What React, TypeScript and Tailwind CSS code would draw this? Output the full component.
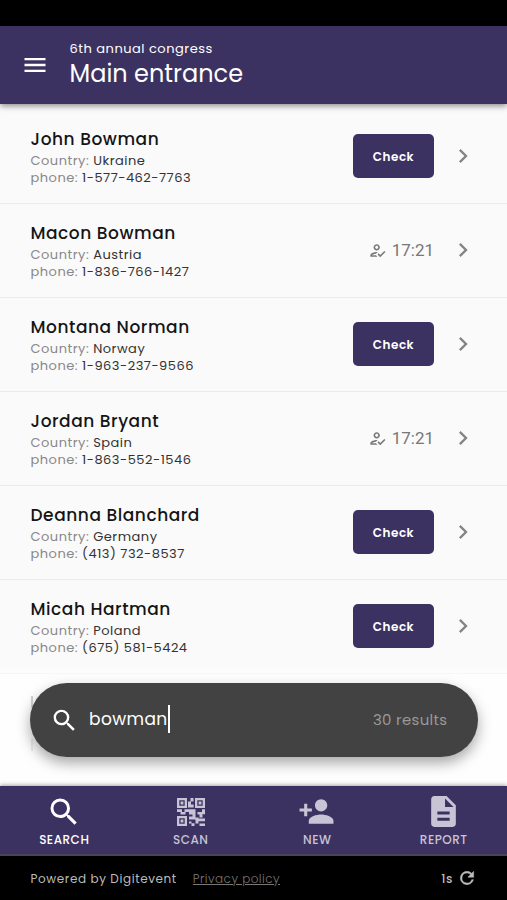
import {
  MdMenu,
  MdSearch,
  MdPersonAdd,
  MdDescription,
  MdChevronRight,
  MdOutlineHowToReg,
} from 'react-icons/md';
import clsx from 'clsx';

type Guest = {
  name: string;
  country: string;
  phone: string;
  checkedAt?: string;
};

const guests: Guest[] = [
  { name: 'John Bowman', country: 'Ukraine', phone: '1-577-462-7763' },
  { name: 'Macon Bowman', country: 'Austria', phone: '1-836-766-1427', checkedAt: '17:21' },
  { name: 'Montana Norman', country: 'Norway', phone: '1-963-237-9566' },
  { name: 'Jordan Bryant', country: 'Spain', phone: '1-863-552-1546', checkedAt: '17:21' },
  { name: 'Deanna Blanchard', country: 'Germany', phone: '(413) 732-8537' },
  { name: 'Micah Hartman', country: 'Poland', phone: '(675) 581-5424' },
];

const QrIcon = () => (
  <svg viewBox="0 0 28 28" className="h-7 w-7" fill="currentColor">
    <path fillRule="evenodd" d="M0 0h10v10H0zM2.3 2.3v5.4h5.4V2.3zM18 0h10v10H18zM20.3 2.3v5.4h5.4V2.3zM0 18h10v10H0zM2.3 20.3v5.4h5.4v-5.4z" />
    <path d="M3.6 3.6h2.8v2.8H3.6zM21.6 3.6h2.8v2.8h-2.8zM3.6 21.6h2.8v2.8H3.6z" />
    <path d="M13.5 0h3v3.5h-3zM11 3.5h3v3h2.7V9.5H11zM0 11.3h5v2.6H0zM3.5 13.9h5v2.5h-5zM7.5 11.3h11v2.6h-11zM12 13.9h6.5v2.5H12zM25 11.3h3v5h-3zM20.5 13.9h4.5v2.5h-4.5zM22.5 16.4h3v3h-3zM12 18.5h4v3h-4zM15.5 16.4h3v5h-3zM18.5 19.4h3v6h-3zM21.5 20.5h6.5v2.7h-6.5zM12 23.5h2.5v2H12zM14.5 25.2h3v2.8h-3zM22.5 25.4H28V28h-5.5z" />
  </svg>
);

const RefreshIcon = () => (
  <svg viewBox="0 0 24 24" className="mb-0.5 ml-1 h-5 w-5" fill="currentColor" stroke="currentColor" strokeWidth="0.6">
    <path d="M17.65 6.35A7.96 7.96 0 0 0 12 4a8 8 0 1 0 7.73 10h-2.08A6 6 0 1 1 12 6c1.66 0 3.14.69 4.22 1.78L13 11h7V4z" />
  </svg>
);

const Header = () => (
  <header className="relative z-10 flex h-[78px] shrink-0 items-center bg-[#3c3261] pl-[21px] text-white shadow-[0_2px_6px_rgba(0,0,0,0.45)]">
    <MdMenu className="h-7 w-7" />
    <div className="ml-[20.5px]">
      <p className="text-[13px] leading-4 tracking-[0.5px]">6th annual congress</p>
      <h1 className="pt-px text-[24px] leading-8">Main entrance</h1>
    </div>
  </header>
);

const GuestRow = ({ guest }: { guest: Guest }) => (
  <li className="flex h-[94px] items-center border-b border-[#ebebeb] pr-[30px] pl-[30.5px]">
    <div className="flex-1">
      <h2 className="text-[17px] leading-[25px] font-medium tracking-[0.55px] text-[#151515]">{guest.name}</h2>
      <p className="text-[13px] leading-[17px] tracking-[0.5px] text-[#333]">
        <span className="text-[#888]">Country:</span> {guest.country}
      </p>
      <p className="text-[13px] leading-[17px] tracking-[0.5px] text-[#333]">
        <span className="text-[#888]">phone:</span> {guest.phone}
      </p>
    </div>
    {guest.checkedAt ? (
      <div className="flex items-center gap-[5px] text-[#777]">
        <MdOutlineHowToReg className="h-[19px] w-[19px]" />
        <span className="font-[Roboto,sans-serif] text-[17px]">{guest.checkedAt}</span>
      </div>
    ) : (
      <button className="mb-px h-11 w-[81px] rounded-[5px] bg-[#3c3261] pt-px text-[12px] font-semibold tracking-[0.5px] text-white">Check</button>
    )}
    <MdChevronRight className="mb-px ml-[15px] h-7 w-7 text-[#858585]" />
  </li>
);

const SearchBar = () => (
  <div className="absolute right-[29.5px] left-[30px] top-[683px] z-10 flex h-[74px] items-center rounded-full bg-[#424242] pr-[30px] pl-5 shadow-[0_6px_14px_rgba(0,0,0,0.35)]">
    <MdSearch className="h-[29px] w-[29px] text-white" />
    <span className="ml-2.5 text-[17px] tracking-[0.4px] text-white">bowman</span>
    <span className="-mt-0.5 h-7 w-[2.5px] bg-white" />
    <span className="ml-auto text-[15px] tracking-[0.3px] text-[#999]">30 results</span>
  </div>
);

const tabs = [
  { label: 'SEARCH', icon: <MdSearch className="h-9 w-9" />, active: true },
  { label: 'SCAN', icon: <QrIcon /> },
  { label: 'NEW', icon: <MdPersonAdd className="mr-0.5 h-[37px] w-[37px]" /> },
  { label: 'REPORT', icon: <MdDescription className="h-[37px] w-[37px]" /> },
];

const TabBar = () => (
  <nav className="relative grid h-[70px] shrink-0 grid-cols-4 border-b-2 border-[#494557] bg-[#3c3261] pl-px shadow-[0_-1px_4px_rgba(0,0,0,0.35)]">
    {tabs.map((tab) => (
      <div key={tab.label} className={clsx('flex flex-col items-center pt-[7px]', tab.active ? 'text-white' : 'text-[#c8c3d5]')}>
        <div className="flex h-[37px] items-center">{tab.icon}</div>
        <span className="text-[12px] leading-[19px] font-medium tracking-[0.5px]">{tab.label}</span>
      </div>
    ))}
  </nav>
);

const Footer = () => (
  <footer className="flex h-11 shrink-0 items-center bg-black pt-px pr-[30px] pl-[30.5px] text-[12px] tracking-[0.6px] text-[#bbb]">
    <span>Powered by Digitevent</span>
    <span className="ml-4 font-light tracking-[0.45px] text-[#777] underline underline-offset-1">Privacy policy</span>
    <span className="ml-auto font-medium">1s</span>
    <RefreshIcon />
  </footer>
);

const App = () => {
  return (
    <div className="relative flex h-[900px] w-[507px] flex-col overflow-hidden bg-black font-[Poppins,Inter,sans-serif]">
      <div className="h-[26px] shrink-0 bg-black" />
      <Header />
      <main className="relative flex-1 overflow-hidden bg-[#fafafa] pt-[6px]">
        <ul>
          {guests.map((guest) => (
            <GuestRow key={guest.name} guest={guest} />
          ))}
          {/* start of the next row, tucked under the search bar */}
          <li className="flex flex-col gap-[31px] pt-[22px] pl-[31px]">
            <span className="h-3 w-0.5 bg-[#333]" />
            <span className="h-3 w-0.5 bg-[#888]" />
          </li>
        </ul>
        {/* fades the end of the list out */}
        <div className="absolute inset-x-0 bottom-0 h-[122px] bg-gradient-to-b from-white/0 via-white/75 via-10% to-white/90" />
      </main>
      <SearchBar />
      <TabBar />
      <Footer />
    </div>
  );
};

export default App;
